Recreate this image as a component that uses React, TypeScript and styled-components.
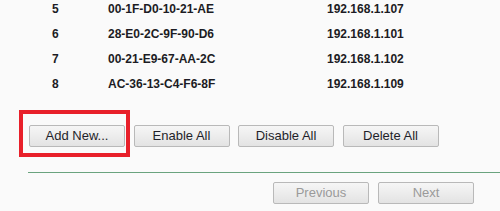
import React from "react";
import styled, { createGlobalStyle } from "styled-components";

const GlobalStyle = createGlobalStyle`
  html, body {
    margin: 0;
    padding: 0;
    background: #fafafa;
  }
  body {
    width: 500px;
    height: 211px;
    overflow: hidden;
    font-family: "Liberation Sans", Arial, sans-serif;
  }
`;

type Entry = { id: number; mac: string; ip: string };

const entries: Entry[] = [
  { id: 5, mac: "00-1F-D0-10-21-AE", ip: "192.168.1.107" },
  { id: 6, mac: "28-E0-2C-9F-90-D6", ip: "192.168.1.101" },
  { id: 7, mac: "00-21-E9-67-AA-2C", ip: "192.168.1.102" },
  { id: 8, mac: "AC-36-13-C4-F6-8F", ip: "192.168.1.109" },
];

const App = () => {
  return (
    <>
      <GlobalStyle />
      <Page>
        <Table>
          {entries.map((e) => (
            <Row key={e.id}>
              <Cell>{e.id}</Cell>
              <Cell>{e.mac}</Cell>
              <Cell>{e.ip}</Cell>
            </Row>
          ))}
        </Table>
        <Actions>
          <Highlight>
            <Button>Add New...</Button>
          </Highlight>
          <Button>Enable All</Button>
          <Button>Disable All</Button>
          <Button>Delete All</Button>
        </Actions>
        <Divider />
        <Pager>
          <Button disabled>Previous</Button>
          <Button disabled>Next</Button>
        </Pager>
      </Page>
    </>
  );
};

export default App;

const Page = styled.div`
  display: flex;
  flex-direction: column;
  width: 500px;
  height: 211px;
  overflow: hidden;
`;

const Table = styled.div`
  display: flex;
  flex-direction: column;
  margin-top: -4px;
`;

const Row = styled.div`
  display: grid;
  grid-template-columns: 56px 219px 1fr;
  align-items: center;
  height: 25px;
  padding-left: 52px;
`;

const Cell = styled.span`
  color: #1c1c24;
  font-size: 12px;
  font-weight: 700;
  white-space: nowrap;
`;

const Actions = styled.div`
  display: flex;
  gap: 8.5px;
  margin-top: 29px;
  padding-left: 29px;
`;

const Highlight = styled.div`
  position: relative;
  display: flex;

  &::before {
    content: "";
    position: absolute;
    left: -10px;
    top: -15px;
    right: -5px;
    bottom: -10px;
    border: 4px solid #e8202a;
    pointer-events: none;
  }
`;

const Button = styled.button`
  width: 96px;
  height: 22px;
  padding: 0;
  border: 1px solid #b9b9b9;
  border-radius: 2px;
  background: linear-gradient(#f6f6f6, #e3e3e3);
  color: ${(p) => (p.disabled ? "#9a9a9a" : "#1f1f2a")};
  font-family: "Liberation Sans", Arial, sans-serif;
  font-size: 13px;
  line-height: 20px;
  cursor: default;
`;

const Divider = styled.div`
  height: 1px;
  margin: 25px 0 0 28px;
  border-top: 1.5px solid #6aa37e;
`;

const Pager = styled.div`
  display: flex;
  justify-content: flex-end;
  gap: 9px;
  margin-top: 7.5px;
  padding-right: 26px;
`;
